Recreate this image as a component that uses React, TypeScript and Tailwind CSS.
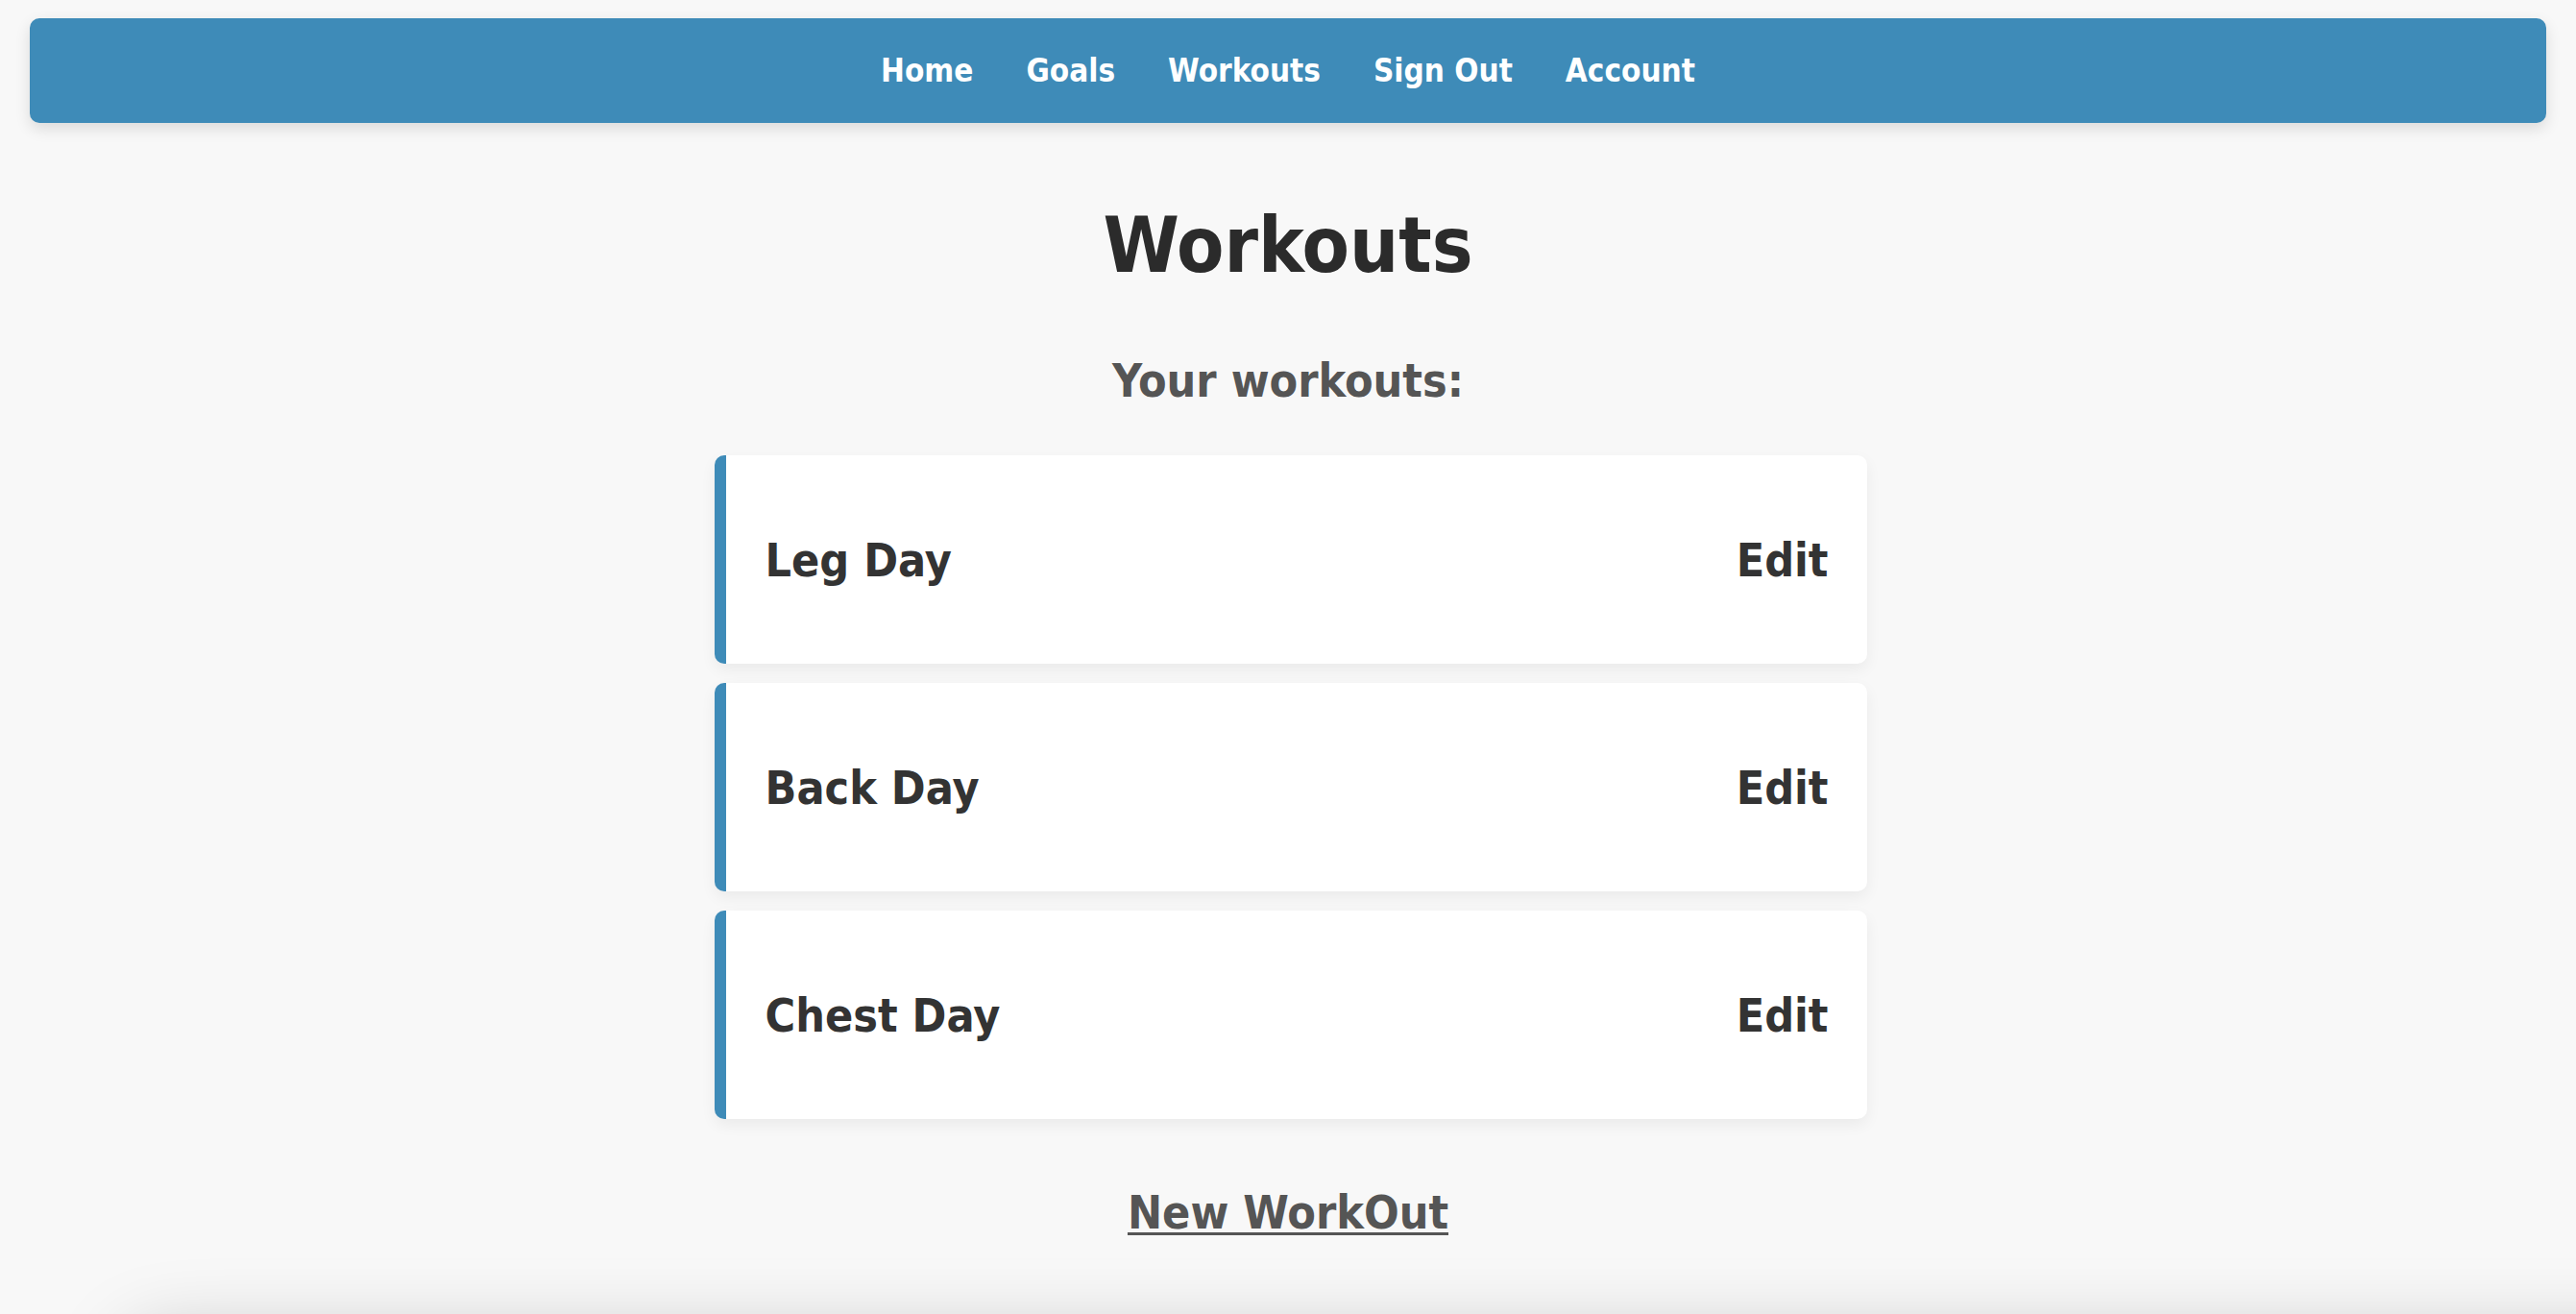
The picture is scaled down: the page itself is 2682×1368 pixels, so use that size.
import React from "react";

const font = { fontFamily: '"DejaVu Sans Condensed", "DejaVu Sans", Verdana, sans-serif' };

export default function App() {
  const workouts = ["Leg Day", "Back Day", "Chest Day"];
  return (
    <div className="relative min-h-[1368px] overflow-hidden bg-[#f8f8f8]" style={font}>
      <div className="px-[31px] pt-[19px]">
        <nav className="flex h-[109px] items-center justify-center gap-[55px] rounded-[10px] bg-[#3e8bb8] shadow-[0_6px_16px_rgba(0,0,0,0.12)]">
          {["Home", "Goals", "Workouts", "Sign Out", "Account"].map((l) => (
            <a key={l} className="text-[33px] font-bold leading-none text-white">
              {l}
            </a>
          ))}
        </nav>
      </div>
      <main className="flex flex-col items-center">
        <h1 className="mt-[88px] text-[80px] font-bold leading-none text-[#2b2b2b]">Workouts</h1>
        <h2 className="mt-[76px] text-[48px] font-bold leading-none text-[#555555]">Your workouts:</h2>
        <div className="ml-[5px] mt-[54px] flex w-[1200px] flex-col gap-[20px]">
          {workouts.map((w) => (
            <div
              key={w}
              className="flex h-[217px] items-center justify-between rounded-[10px] border-l-[12px] border-[#3e8bb8] bg-white pl-[41px] pr-[40px] shadow-[0_6px_16px_rgba(0,0,0,0.06)]"
            >
              <span className="text-[48px] font-bold leading-none text-[#333333]">{w}</span>
              <span className="text-[48px] font-bold leading-none text-[#333333]">Edit</span>
            </div>
          ))}
        </div>
        <a className="mt-[73px] text-[48px] font-bold leading-none text-[#555555] underline decoration-[3px] underline-offset-[4px]">
          New WorkOut
        </a>
      </main>
      <div className="absolute left-[130px] right-[-200px] top-[1390px] h-[400px] rounded-[40px] bg-[#f8f8f8] shadow-[0_0_80px_rgba(0,0,0,0.22)]" />
    </div>
  );
}
